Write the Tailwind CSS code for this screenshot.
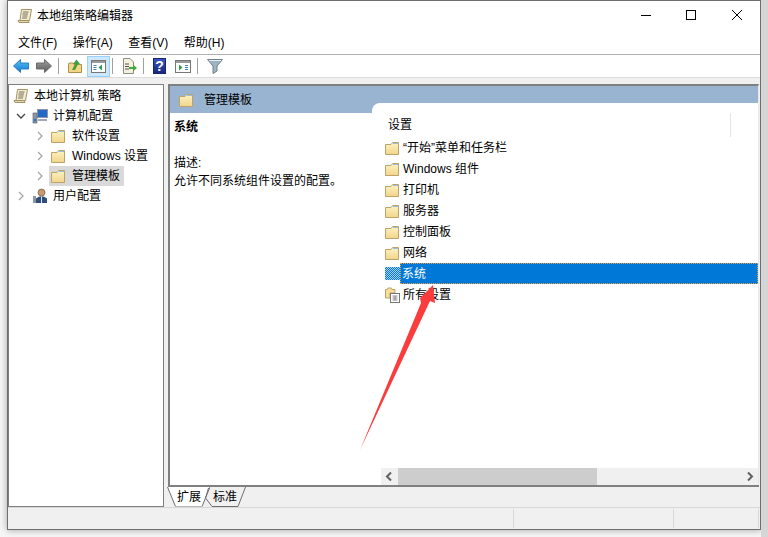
<!DOCTYPE html>
<html lang="zh-CN">
<head>
<meta charset="UTF-8">
<title>本地组策略编辑器</title>
<script src="https://cdn.jsdelivr.net/npm/@tailwindcss/browser@4"></script>
</head>
<body class="w-[768px] h-[537px] overflow-hidden flex items-start bg-[#f6f6f6] text-black text-[12px] leading-[16px] font-['Liberation_Sans','Noto_Sans_CJK_SC',sans-serif]">

<svg width="0" height="0" class="absolute">
  <defs>
    <linearGradient id="fg" x1="0" y1="0" x2="0" y2="1"><stop offset="0" stop-color="#fdf3c4"/><stop offset="1" stop-color="#f2d58a"/></linearGradient>
    <linearGradient id="bluearrow" x1="0" y1="0" x2="0" y2="1"><stop offset="0" stop-color="#5cc0f5"/><stop offset="1" stop-color="#1478d4"/></linearGradient>
    <linearGradient id="greyarrow" x1="0" y1="0" x2="0" y2="1"><stop offset="0" stop-color="#a0a0a0"/><stop offset="1" stop-color="#5c5c5c"/></linearGradient>
    <symbol id="folder" viewBox="0 0 16 16">
      <path d="M1.500 4.500V14.500H14.500V2.500H8.500L7 4.500Z" fill="url(#fg)" stroke="#bda36a"/>
      <path d="M9 3.500H14" stroke="#8fc0e8"/>
    </symbol>
    <symbol id="scroll" viewBox="0 0 16 16">
      <path d="M4.500 1.500H14.500L12.500 12.500H3Z" fill="#f4ecd0" stroke="#a39468"/>
      <path d="M1 12.500H11.500L12 14.500H2Z" fill="#e6d8a8" stroke="#a39468"/>
      <path d="M6 4H11.500M5.500 6H11M5.500 8H10.500M5 10H10" stroke="#77735f"/>
    </symbol>
  </defs>
</svg>

<!-- WINDOW -->
<div class="ml-[7px] w-[754px] h-[530px] shrink-0 bg-white border border-[#6e6e6e] shadow-[0_0_7px_rgba(0,0,0,0.35)] flex flex-col">

  <!-- TITLE BAR -->
  <div class="h-[30px] flex items-center bg-white shrink-0">
    <svg class="ml-[9px] w-[16px] h-[16px]"><use href="#scroll"/></svg>
    <span class="ml-[4px]">本地组策略编辑器</span>
    <div class="ml-auto flex items-center">
      <svg class="w-[46px] h-[30px]" viewBox="0 0 46 30"><path d="M19 14.500H29" stroke="#000"/></svg>
      <svg class="w-[46px] h-[30px]" viewBox="0 0 46 30"><rect x="18.500" y="9.500" width="9" height="9" fill="none" stroke="#000"/></svg>
      <svg class="w-[46px] h-[30px]" viewBox="0 0 46 30"><path d="M18 9L28 19M28 9L18 19" stroke="#000"/></svg>
    </div>
  </div>

  <!-- MENU -->
  <div class="h-[24px] flex items-center bg-white shrink-0 border-b border-[#b0b0b0] pl-[10px] gap-[15.500px]">
    <span>文件(F)</span><span>操作(A)</span><span>查看(V)</span><span>帮助(H)</span>
  </div>

  <!-- TOOLBAR -->
  <div class="h-[23px] flex items-center bg-white shrink-0 pl-[5px] border-b border-[#dcdcdc]">
    <svg class="w-[16px] h-[16px]" viewBox="0 0 16 16"><path d="M0.500 8L7.500 1.500V5H15.500V11H7.500V14.500Z" fill="url(#bluearrow)" stroke="#2d7fc0" stroke-linejoin="round"/></svg>
    <svg class="ml-[7px] w-[16px] h-[16px]" viewBox="0 0 16 16"><path d="M15.500 8L8.500 1.500V5H0.500V11H8.500V14.500Z" fill="url(#greyarrow)" stroke="#6a6a6a" stroke-linejoin="round"/></svg>
    <div class="ml-[6px] w-px h-[16px] bg-[#a0a0a0]"></div>
    <svg class="ml-[8px] w-[16px] h-[16px]" viewBox="0 0 16 16"><path d="M1.500 6.500V14.500H14.500V6.500H7L6 5H2Z" fill="#f2d483" stroke="#b08f4e"/><path d="M5 12L8 6H6L9.500 1.500L13 6H11L8 12Z" fill="#3f9e3f"/></svg>
    <div class="ml-[4px] w-[23px] h-[21px] bg-[#cce8ff] border border-[#99d1ff] flex items-center justify-center">
      <svg class="w-[15px] h-[13px]" viewBox="0 0 15 13"><rect x="0.500" y="0.500" width="14" height="12" fill="#fff" stroke="#777"/><rect x="1" y="1" width="13" height="2" fill="#9a9a9a"/><path d="M2.500 5.500H5.500M2.500 7.500H5.500M2.500 9.500H5.500" stroke="#4a7fb0"/><path d="M11 4.500V10.500L7.500 7.500Z" fill="#2e9e4a"/></svg>
    </div>
    <div class="ml-[2px] w-px h-[16px] bg-[#a0a0a0]"></div>
    <svg class="ml-[8px] w-[16px] h-[16px]" viewBox="0 0 16 16"><path d="M2.500 0.500H9L12.500 4V15.500H2.500Z" fill="#f5f0dc" stroke="#8d8d80"/><path d="M4 6H8M4 8.500H8M4 11H8" stroke="#555"/><path d="M8 9H12V6.500L16 10L12 13.500V11H8Z" fill="#45a845"/></svg>
    <div class="ml-[6px] w-px h-[16px] bg-[#a0a0a0]"></div>
    <div class="ml-[9px] w-[13px] h-[16px] bg-gradient-to-b from-[#3a55c8] to-[#18287e] border border-[#16246a] text-white text-[14px] leading-[14px] font-bold text-center font-['Liberation_Sans',sans-serif]">?</div>
    <svg class="ml-[9px] w-[16px] h-[13px]" viewBox="0 0 16 13"><rect x="0.500" y="0.500" width="15" height="12" fill="#fff" stroke="#777"/><rect x="1" y="1" width="14" height="2" fill="#9a9a9a"/><path d="M10 5.500H13M10 7.500H13M10 9.500H13" stroke="#4a7fb0"/><path d="M4 4.500V10.500L7.500 7.500Z" fill="#2e9e4a"/></svg>
    <div class="ml-[6px] w-px h-[16px] bg-[#a0a0a0]"></div>
    <svg class="ml-[9px] w-[16px] h-[16px]" viewBox="0 0 16 16"><path d="M0.500 1.500H15.500L10 8V13L6 15.500V8Z" fill="#9db5c2" stroke="#70808a"/><path d="M2 2.500H14" stroke="#e4eef2"/></svg>
  </div>

  <!-- BODY -->
  <div class="h-[429px] shrink-0 flex bg-[#f0f0f0] pt-[6px]">

    <!-- TREE -->
    <div class="w-[156px] h-[423px] bg-white border border-[#808080] pt-[1px] pl-[2px] shrink-0">
      <div class="h-[20px] flex items-center"><svg class="ml-[2px] w-[16px] h-[16px]"><use href="#scroll"/></svg><span class="ml-[5px]">本地计算机 策略</span></div>
      <div class="h-[20px] flex items-center">
        <svg class="ml-[4px] w-[12px] h-[12px]" viewBox="0 0 12 12"><path d="M2 4L6 8L10 4" fill="none" stroke="#444" stroke-width="1.300"/></svg>
        <svg class="ml-[5px] w-[16px] h-[16px]" viewBox="0 0 16 16"><rect x="5.500" y="1.500" width="10" height="8" fill="#2468c8" stroke="#8a97a6"/><path d="M6 11H15V13H6Z" fill="#a0a8b0"/><rect x="1" y="5" width="4" height="10" fill="#8a97a6" stroke="#4d5a68" stroke-width="0.600"/><circle cx="3" cy="12" r="1.200" fill="#2a6fc4"/></svg>
        <span class="ml-[5px]">计算机配置</span>
      </div>
      <div class="h-[20px] flex items-center">
        <svg class="ml-[23px] w-[12px] h-[12px]" viewBox="0 0 12 12"><path d="M4 2L8 6L4 10" fill="none" stroke="#a6a6a6" stroke-width="1.300"/></svg>
        <svg class="ml-[4px] w-[16px] h-[16px]"><use href="#folder"/></svg>
        <span class="ml-[6px]">软件设置</span>
      </div>
      <div class="h-[20px] flex items-center">
        <svg class="ml-[23px] w-[12px] h-[12px]" viewBox="0 0 12 12"><path d="M4 2L8 6L4 10" fill="none" stroke="#a6a6a6" stroke-width="1.300"/></svg>
        <svg class="ml-[4px] w-[16px] h-[16px]"><use href="#folder"/></svg>
        <span class="ml-[6px]">Windows 设置</span>
      </div>
      <div class="h-[20px] flex items-center">
        <svg class="ml-[23px] w-[12px] h-[12px]" viewBox="0 0 12 12"><path d="M4 2L8 6L4 10" fill="none" stroke="#a6a6a6" stroke-width="1.300"/></svg>
        <div class="ml-[3px] h-[20px] w-[75px] bg-[#d9d9d9] flex items-center pl-[1px]">
          <svg class="w-[16px] h-[16px]"><use href="#folder"/></svg>
          <span class="ml-[6px]">管理模板</span>
        </div>
      </div>
      <div class="h-[20px] flex items-center">
        <svg class="ml-[4px] w-[12px] h-[12px]" viewBox="0 0 12 12"><path d="M4 2L8 6L4 10" fill="none" stroke="#a6a6a6" stroke-width="1.300"/></svg>
        <svg class="ml-[5px] w-[16px] h-[16px]" viewBox="0 0 16 16"><circle cx="9.500" cy="4.500" r="3.500" fill="#c99a6c" stroke="#6b5a48" stroke-width="0.700"/><path d="M4 15V10.500Q9.500 6 15 10.500V15Z" fill="#2f4f7a"/><path d="M9.500 8.500V15" stroke="#dfe6ee"/><rect x="1" y="8" width="3" height="7" fill="#8a97a6"/></svg>
        <span class="ml-[5px]">用户配置</span>
      </div>
    </div>

    <!-- RIGHT PANE -->
    <div class="ml-[4px] w-[591px] h-[423px] flex flex-col shrink-0">
      <div class="h-[401px] shrink-0 bg-white border-l-2 border-t-2 border-r border-[#808080] border-r-[#e8e8e8] flex flex-col relative">
        <div class="h-[27px] bg-[#99b4d1] flex items-center pl-[8px] shrink-0">
          <svg class="w-[16px] h-[16px]"><use href="#folder"/></svg>
          <span class="ml-[10px]">管理模板</span>
        </div>
        <!-- white rounded sheet over the blue band -->
        <div class="absolute left-[202px] top-[17px] right-0 h-[10px] bg-white rounded-tl-[8px]"></div>

        <div class="flex-1 min-h-0 flex">
          <!-- description -->
          <div class="w-[211px] pl-[4px] pt-[6px] shrink-0">
            <p class="font-bold">系统</p>
            <p class="mt-[20px]">描述:</p>
            <p class="mt-[2px] whitespace-nowrap">允许不同系统组件设置的配置。</p>
          </div>
          <!-- list -->
          <div class="flex-1 min-w-0 flex flex-col">
            <div class="h-[24px] flex items-center pl-[7px] pb-px relative shrink-0">设置<div class="absolute right-[27px] top-0 w-px h-[24px] bg-[#e5e5e5]"></div></div>
            <div class="flex-1">
              <div class="h-[21px] flex items-center pl-[3px]"><svg class="w-[16px] h-[16px]"><use href="#folder"/></svg><span class="ml-[3px]">“开始”菜单和任务栏</span></div>
              <div class="h-[21px] flex items-center pl-[3px]"><svg class="w-[16px] h-[16px]"><use href="#folder"/></svg><span class="ml-[3px]">Windows 组件</span></div>
              <div class="h-[21px] flex items-center pl-[3px]"><svg class="w-[16px] h-[16px]"><use href="#folder"/></svg><span class="ml-[3px]">打印机</span></div>
              <div class="h-[21px] flex items-center pl-[3px]"><svg class="w-[16px] h-[16px]"><use href="#folder"/></svg><span class="ml-[3px]">服务器</span></div>
              <div class="h-[21px] flex items-center pl-[3px]"><svg class="w-[16px] h-[16px]"><use href="#folder"/></svg><span class="ml-[3px]">控制面板</span></div>
              <div class="h-[21px] flex items-center pl-[3px]"><svg class="w-[16px] h-[16px]"><use href="#folder"/></svg><span class="ml-[3px]">网络</span></div>
              <div class="h-[21px] flex items-center pl-[3px]">
                <div class="ml-[1px] w-[15px] h-[13px] bg-[repeating-conic-gradient(#0a78d8_0_25%,#9fd2f0_0_50%)] bg-[length:2px_2px]"></div>
                <div class="flex-1 h-[21px] bg-[#0078d7] border border-dotted border-[#e0a050] text-white flex items-center pl-[1px]">系统</div>
              </div>
              <div class="h-[21px] flex items-center pl-[3px]">
                <svg class="w-[16px] h-[16px]" viewBox="0 0 16 16"><path d="M1.500 11V2.500H3L4 1H7.500L8 2.500H11V6H6V11Z" fill="#f6dd9a" stroke="#bda36a"/><rect x="6.500" y="6.500" width="9" height="9" fill="#fff" stroke="#777"/><path d="M8.500 9H13.500M8.500 11H13.500M8.500 13H13.500M11 9V13" stroke="#888"/></svg>
                <span class="ml-[3px]">所有设置</span>
              </div>
            </div>
            <!-- horizontal scrollbar -->
            <div class="h-[17px] flex items-center bg-[#f0f0f0] shrink-0">
              <svg class="w-[17px] h-[17px]" viewBox="0 0 17 17"><path d="M10 4.500L6 8.500L10 12.500" fill="none" stroke="#606060" stroke-width="2"/></svg>
              <div class="h-[17px] w-[199px] bg-[#cdcdcd]"></div>
              <svg class="ml-auto w-[17px] h-[17px]" viewBox="0 0 17 17"><path d="M7 4.500L11 8.500L7 12.500" fill="none" stroke="#606060" stroke-width="2"/></svg>
            </div>
          </div>
        </div>
        <!-- red annotation arrow -->
        <svg class="absolute left-[190px] top-[197px] w-[90px] h-[170px]" viewBox="362 283 90 170"><path d="M362 450L423 303L422 298L435 285L437 303L432 301Z" fill="#fa3c3c"/></svg>
      </div>
      <!-- tabs -->
      <div class="h-[22px] shrink-0 border-t-2 border-[#808080] bg-[#f0f0f0] flex">
        <div class="relative -ml-px w-[43px] h-[20px] pl-[10px] flex items-center">
          <svg class="absolute left-0 top-0 w-[43px] h-[20px]" viewBox="0 0 43 20"><path d="M0.500 0L8.500 19.500H35L43 0Z" fill="#fff"/><path d="M0.500 0L8.500 19.500M35 19.500L43 0" fill="none" stroke="#6e6e6e"/><path d="M8.500 19.500H35" stroke="#b8b8b8"/></svg>
          <span class="relative">扩展</span>
        </div>
        <div class="relative -ml-[5px] w-[41px] h-[20px] pl-[8px] flex items-center">
          <svg class="absolute left-0 top-0 w-[41px] h-[20px]" viewBox="0 0 41 20"><path d="M3.500 1L0.500 11L7 19.500H33L40.500 0" fill="none" stroke="#6e6e6e"/></svg>
          <span class="relative">标准</span>
        </div>
      </div>
    </div>
  </div>

  <!-- STATUS BAR -->
  <div class="flex-1 min-h-0 border-t border-[#d7d7d7] bg-[#f0f0f0] flex justify-end pr-[1px] pt-[1px]">
    <div class="w-[160px] h-[19px] border-l border-[#d7d7d7]"></div>
    <div class="w-[86px] h-[19px] border-x border-[#d7d7d7]"></div>
  </div>
</div>

<!-- desktop behind the window, right edge -->
<div class="w-[7px] h-[537px] shrink-0 bg-[#d6d6d6]"></div>
</body>
</html>
